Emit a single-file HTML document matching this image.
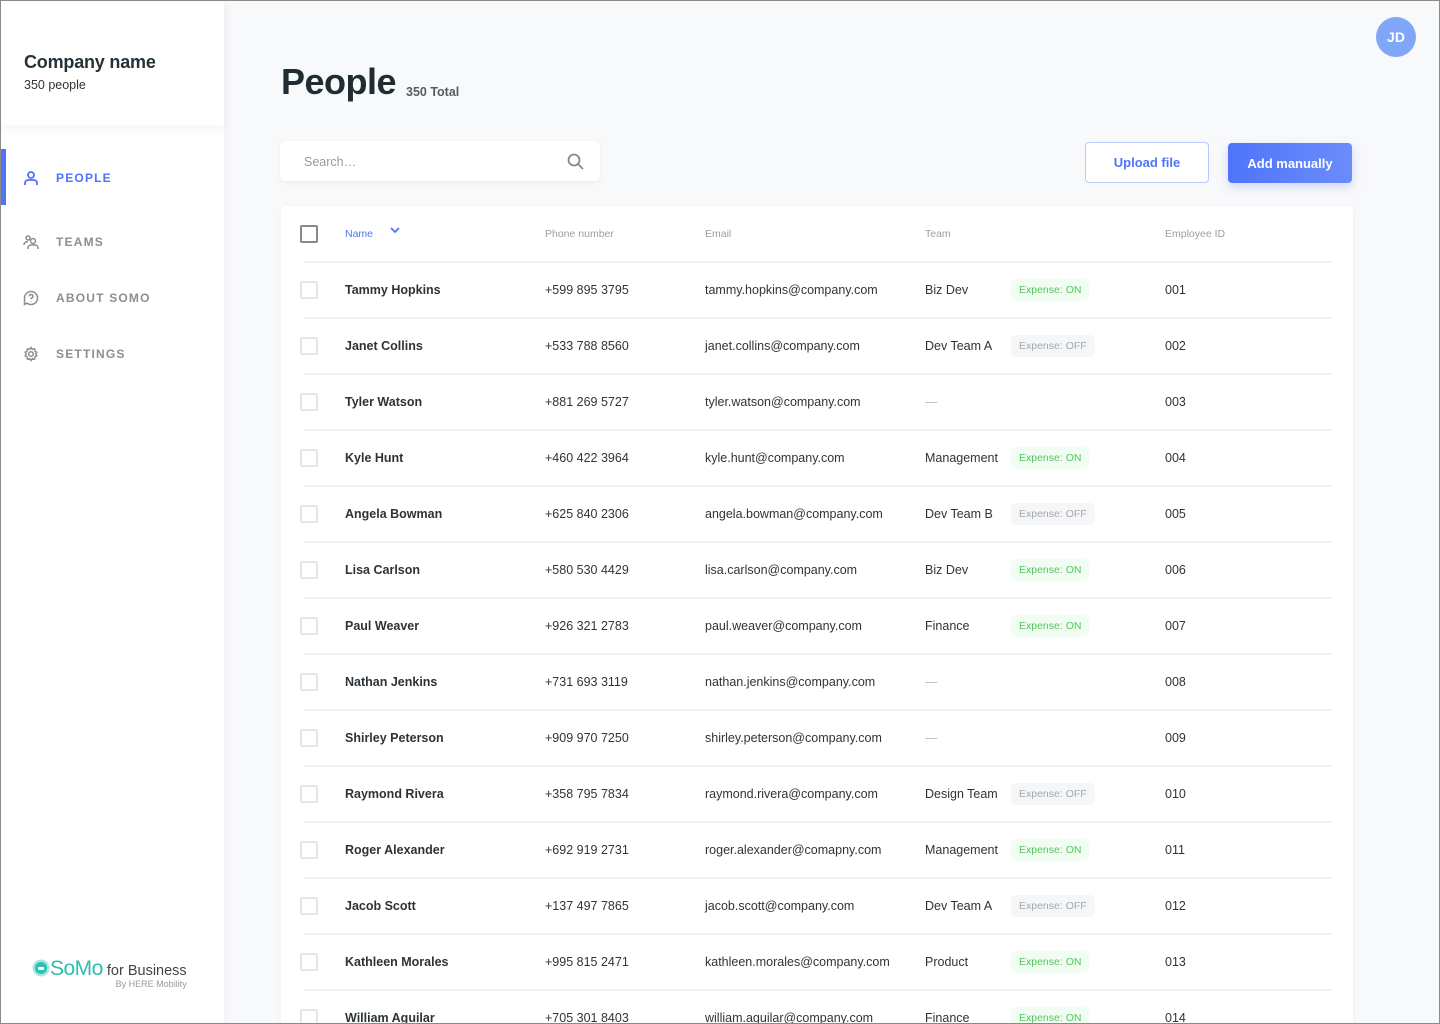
<!DOCTYPE html>
<html><head><meta charset="utf-8"><style>
*{box-sizing:border-box;margin:0;padding:0}
html,body{width:1440px;height:1024px;overflow:hidden}
body{background:#f8f9fb;font-family:"Liberation Sans",sans-serif;color:#2c3338;position:relative}
.frame{position:absolute;left:0;top:0;width:1440px;height:1024px;border:1px solid #8a8a8a;pointer-events:none;z-index:10}
.side{position:absolute;left:0;top:0;width:224px;height:1024px;background:#fff;box-shadow:2px 0 10px rgba(0,0,0,.03)}
.co{height:125px;padding:52px 0 0 24px;box-shadow:0 6px 10px rgba(0,0,0,.04)}
.co b{font-size:18px;color:#263238;display:block;letter-spacing:-.2px}
.co span{font-size:12.5px;color:#333;display:block;margin-top:5px}
.nav{position:absolute;left:23px;font-size:12px;font-weight:bold;letter-spacing:1.2px;color:#8a8f94;display:flex;align-items:center}
.nav svg{margin-right:17px}
.act{position:absolute;left:1px;top:149px;width:5px;height:56px;background:#4f74f9}
.logo{position:absolute;left:32px;top:957px}
h1{position:absolute;left:281px;top:61px;font-size:36px;color:#1f2d33;font-weight:bold;letter-spacing:-.5px}
.tot{position:absolute;left:406px;top:85px;font-size:12.5px;font-weight:bold;color:#555c62}
.search{position:absolute;left:280px;top:141px;width:320px;height:40px;background:#fff;border-radius:5px;box-shadow:0 2px 6px rgba(0,0,0,.05);font-size:12.5px;color:#999;padding:14px 0 0 24px}
.btn1{position:absolute;left:1085px;top:142px;width:124px;height:41px;border:1px solid #b9c9fb;border-radius:4px;background:#fff;color:#4f74f9;font-weight:bold;font-size:13px;text-align:center;line-height:40px}
.btn2{position:absolute;left:1228px;top:143px;width:124px;height:40px;border-radius:4px;background:linear-gradient(90deg,#4f74f9,#6b8cfb);color:#fff;font-weight:bold;font-size:13px;text-align:center;line-height:41px;box-shadow:0 4px 10px rgba(79,116,249,.25)}
.card{position:absolute;left:281px;top:206px;width:1072px;height:830px;background:#fff;border-radius:6px;box-shadow:0 2px 8px rgba(0,0,0,.04)}
.row{position:absolute;left:0;width:1072px;height:56px;font-size:12.5px;color:#333}
.row>*{position:absolute;top:50%;transform:translateY(-50%)}
.sep{position:absolute;left:23px;width:1027px;height:2px;background:#f1f2f4}
.cb{left:19px;width:18px;height:18px;border:2px solid #e6e6e6;border-radius:2px}
.hd{font-size:10.5px;color:#9a9ea2}
.nm{left:64px;font-weight:bold;color:#2c3338}
.bd{left:730px;font-size:10.5px;padding:5px 8px;border-radius:5px}
.on{background:#f1fdf2;color:#55c460}
.off{background:#f5f6f8;color:#a4a8ab}
.av{position:absolute;left:1376px;top:17px;width:40px;height:40px;border-radius:50%;background:#7fa6f7;color:#fff;font-weight:bold;font-size:14px;text-align:center;line-height:40px}
</style></head><body>
<div class="frame"></div>
<div class="side">
<div class="co"><b>Company name</b><span>350 people</span></div>
<div class="act"></div>
<div class="nav" style="top:170px;color:#4f74f9"><svg width="16" height="16" viewBox="0 0 16 16" fill="none" stroke="#4f74f9" stroke-width="1.8"><circle cx="8" cy="5" r="3"/><path d="M2 15v-2a3 3 0 0 1 3-3h6a3 3 0 0 1 3 3v2"/></svg>PEOPLE</div>
<div class="nav" style="top:234px"><svg width="16" height="16" viewBox="0 0 16 16" fill="none" stroke="#8a8f94" stroke-width="1.5"><circle cx="5" cy="4" r="2"/><circle cx="10" cy="7" r="2.5"/><path d="M1 11a3 3 0 0 1 4-3M5 15v-1a3 3 0 0 1 3-3h4a3 3 0 0 1 3 3v1"/></svg>TEAMS</div>
<div class="nav" style="top:290px"><svg width="16" height="16" viewBox="0 0 16 16" fill="none" stroke="#8a8f94" stroke-width="1.5"><path d="M8 1.5a6.5 6.5 0 1 1-4 11.6L1.5 14.5V8A6.5 6.5 0 0 1 8 1.5z"/><path d="M6.3 6.3a1.8 1.8 0 1 1 2.4 1.7c-.5.2-.7.6-.7 1.2M8 11v.5"/></svg>ABOUT SOMO</div>
<div class="nav" style="top:346px"><svg width="16" height="16" viewBox="0 0 16 16" fill="none" stroke="#8a8f94" stroke-width="1.5"><circle cx="8" cy="8" r="2.3"/><path d="M8 1.5l1.3 1.8 2.2-.5.5 2.2 1.8 1.3-1.1 1.7 1.1 1.7-1.8 1.3-.5 2.2-2.2-.5L8 14.5l-1.3-1.8-2.2.5-.5-2.2-1.8-1.3L3.3 8 2.2 6.3 4 5l.5-2.2 2.2.5z"/></svg>SETTINGS</div>
<div class="logo"><svg width="18" height="18" viewBox="0 0 18 18" style="vertical-align:-2px"><circle cx="9" cy="9" r="8.5" fill="#a9e5e1"/><circle cx="9" cy="9" r="6" fill="#2fc0b5"/><rect x="6" y="8" width="6" height="3" rx="1" fill="#fff"/></svg><span style="font-size:21px;color:#2fbdb2;letter-spacing:-.5px">SoMo</span><span style="font-size:14.5px;color:#444"> for Business</span><div style="font-size:9px;color:#999;text-align:right;margin-top:-2px">By HERE Mobility</div></div>
</div>
<h1>People</h1><div class="tot">350 Total</div>
<div class="search">Search…<svg style="position:absolute;right:16px;top:12px" width="17" height="17" viewBox="0 0 17 17" fill="none" stroke="#888" stroke-width="1.8"><circle cx="7" cy="7" r="5.5"/><path d="M11 11l5 5"/></svg></div>
<div class="btn1">Upload file</div><div class="btn2">Add manually</div>
<div class="av">JD</div>
<div class="card">
<div class="row" style="top:0">
<div class="cb" style="border-color:#888"></div>
<div class="hd" style="left:64px;color:#4f74f9">Name</div>
<svg style="position:absolute;left:109px;top:24px" width="10" height="8" viewBox="0 0 10 8" fill="none" stroke="#4f74f9" stroke-width="1.8"><path d="M1 2l4 4 4-4"/></svg>
<div class="hd" style="left:264px">Phone number</div><div class="hd" style="left:424px">Email</div><div class="hd" style="left:644px">Team</div><div class="hd" style="left:884px">Employee ID</div>
</div>
<div id="rows"></div>
</div>
<script>
var d=[["Tammy Hopkins","+599 895 3795","tammy.hopkins@company.com","Biz Dev",1],["Janet Collins","+533 788 8560","janet.collins@company.com","Dev Team A",0],["Tyler Watson","+881 269 5727","tyler.watson@company.com","—",2],["Kyle Hunt","+460 422 3964","kyle.hunt@company.com","Management",1],["Angela Bowman","+625 840 2306","angela.bowman@company.com","Dev Team B",0],["Lisa Carlson","+580 530 4429","lisa.carlson@company.com","Biz Dev",1],["Paul Weaver","+926 321 2783","paul.weaver@company.com","Finance",1],["Nathan Jenkins","+731 693 3119","nathan.jenkins@company.com","—",2],["Shirley Peterson","+909 970 7250","shirley.peterson@company.com","—",2],["Raymond Rivera","+358 795 7834","raymond.rivera@company.com","Design Team",0],["Roger Alexander","+692 919 2731","roger.alexander@comapny.com","Management",1],["Jacob Scott","+137 497 7865","jacob.scott@company.com","Dev Team A",0],["Kathleen Morales","+995 815 2471","kathleen.morales@company.com","Product",1],["William Aguilar","+705 301 8403","william.aguilar@company.com","Finance",1]];
var h="";d.forEach(function(r,i){var t=56*(i+1);h+='<div class="sep" style="top:'+(t-1)+'px"></div><div class="row" style="top:'+t+'px"><div class="cb"></div><div class="nm">'+r[0]+'</div><div style="left:264px">'+r[1]+'</div><div style="left:424px">'+r[2]+'</div><div style="left:644px'+(r[4]==2?';color:#bbb':'')+'">'+r[3]+'</div>'+(r[4]==1?'<div class="bd on">Expense: ON</div>':r[4]==0?'<div class="bd off">Expense: OFF</div>':'')+'<div style="left:884px">'+String(i+1).padStart(3,"0")+'</div></div>'});
document.getElementById("rows").innerHTML=h;
</script>
</body></html>
